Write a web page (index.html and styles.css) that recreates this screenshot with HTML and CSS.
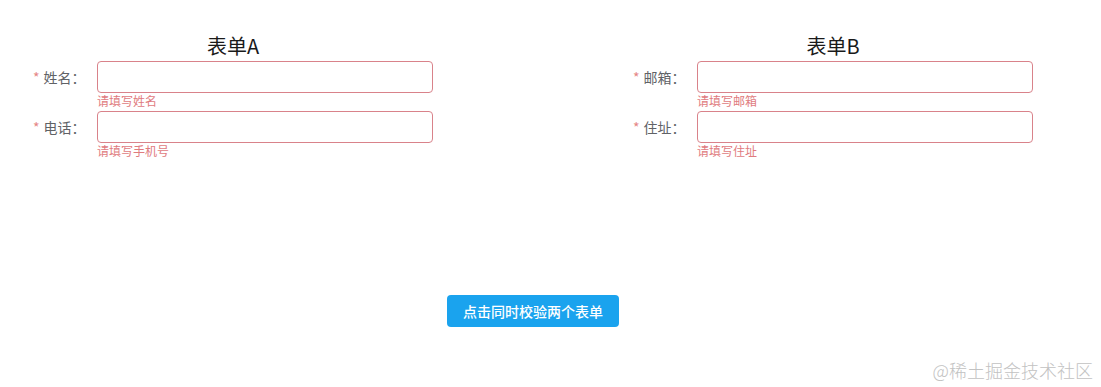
FILE: index.html
```html
<!DOCTYPE html>
<html lang="zh">
<head>
<meta charset="utf-8">
<title>表单校验</title>
<link rel="stylesheet" href="styles.css">
</head>
<body>
<div class="page">
  <div class="forms">
    <form class="form">
      <h2 class="form-title">表单A</h2>
      <div class="item">
        <label class="label"><span class="star">*</span>姓名：</label>
        <div class="control">
          <input class="input" type="text">
          <div class="error">请填写姓名</div>
        </div>
      </div>
      <div class="item">
        <label class="label"><span class="star">*</span>电话：</label>
        <div class="control">
          <input class="input" type="text">
          <div class="error">请填写手机号</div>
        </div>
      </div>
    </form>
    <form class="form">
      <h2 class="form-title">表单B</h2>
      <div class="item">
        <label class="label"><span class="star">*</span>邮箱：</label>
        <div class="control">
          <input class="input" type="text">
          <div class="error">请填写邮箱</div>
        </div>
      </div>
      <div class="item">
        <label class="label"><span class="star">*</span>住址：</label>
        <div class="control">
          <input class="input" type="text">
          <div class="error">请填写住址</div>
        </div>
      </div>
    </form>
  </div>
  <div class="actions">
    <button class="btn" type="button">点击同时校验两个表单</button>
  </div>
</div>
<div class="watermark">@稀土掘金技术社区</div>
</body>
</html>
```

FILE: styles.css
```css
html, body {
  margin: 0;
  padding: 0;
  background: #fff;
}
body {
  font-family: "Noto Sans CJK SC", "Liberation Sans", sans-serif;
  width: 1101px;
  height: 387px;
  position: relative;
  overflow: hidden;
}
.page {
  width: 1066px;
  box-sizing: border-box;
  padding: 33px 33px 0;
}
.forms {
  display: flex;
  gap: 200px;
}
.form {
  width: 400px;
  margin: 0;
}
.form-title {
  margin: 0 0 2px;
  font-size: 20px;
  line-height: 26px;
  font-weight: 400;
  text-align: center;
  color: #1a1a1a;
}
.item {
  display: flex;
}
.label {
  width: 64px;
  flex: none;
  box-sizing: border-box;
  padding-right: 12px;
  text-align: right;
  font-size: 14px;
  line-height: 32px;
  color: #606266;
  white-space: nowrap;
}
.star {
  color: #e58585;
  margin-right: 4px;
}
.control {
  flex: 1;
}
.input {
  display: block;
  width: 100%;
  height: 32px;
  box-sizing: border-box;
  border: 1px solid #d9828a;
  border-radius: 4px;
  background: #fff;
  outline: none;
  padding: 0 12px;
  font-family: inherit;
  font-size: 14px;
}
.error {
  font-size: 12px;
  line-height: 16px;
  height: 18px;
  color: #df7b7e;
}
.actions {
  display: flex;
  justify-content: center;
  margin-top: 134px;
}
.btn {
  height: 32px;
  padding: 0 16px;
  border: none;
  border-radius: 4px;
  background: #1aa3ee;
  color: #fff;
  font-family: inherit;
  font-size: 14px;
  font-weight: 500;
}
.watermark {
  position: absolute;
  right: 8px;
  bottom: 5px;
  font-size: 18px;
  line-height: 24px;
  color: #c2c2c2;
  font-weight: 300;
}
```
